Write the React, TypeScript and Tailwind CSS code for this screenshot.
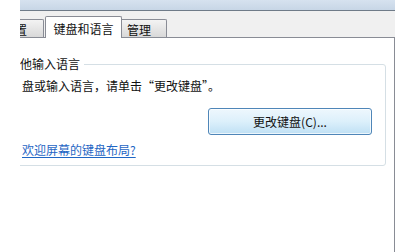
import React from "react";

const font = { fontFamily: '"Noto Sans CJK SC", "Microsoft YaHei", sans-serif' };

export default function App() {
  return (
    <div
      className="flex w-[404px] h-[252px] bg-white overflow-hidden text-[12px] leading-[14px] text-[#111111]"
      style={font}
    >
      <div className="w-[20px] shrink-0" />
      <div className="flex flex-col w-[375px] shrink-0 overflow-hidden">
        {/* window top strip */}
        <div className="h-[11px] shrink-0 bg-gradient-to-b from-[#d6e2ef] to-[#c7d6e6] border-b border-[#6f7b88]" />
        {/* tab bar */}
        <div className="h-[26px] shrink-0 bg-[#f0f0f0] flex items-end">
          <div className="w-[24px] h-[18px] overflow-hidden flex justify-end pr-[16px] pt-[3px] bg-gradient-to-b from-[#f3f3f3] to-[#d9d9d9] border-r border-t border-[#898c95] rounded-tr-[2px] whitespace-nowrap">
            位置
          </div>
          <div className="w-[1px]" />
          <div className="relative z-10 mb-[-1px] h-[22px] w-[77px] bg-white border-l border-r border-t border-[#898c95] rounded-t-[2px] flex justify-center pt-[5px] whitespace-nowrap">
            键盘和语言
          </div>
          <div className="h-[18px] w-[45px] bg-gradient-to-b from-[#f3f3f3] to-[#d9d9d9] border-r border-t border-[#898c95] rounded-tr-[2px] pl-[5px] pt-[3px] whitespace-nowrap">
            管理
          </div>
        </div>
        {/* panel */}
        <div className="flex-1 bg-white border-t border-r border-[#898c95] overflow-hidden">
          <fieldset className="mt-[19px] ml-[-14px] mr-[8px] border border-[#d5dfe5] rounded-[3px] pb-[8px]">
            <legend className="pl-[1px] pr-[4px] whitespace-nowrap leading-[14px]">其他输入语言</legend>
            <div className="mt-[8px] ml-[15px] whitespace-nowrap">盘或输入语言，请单击“更改键盘”。</div>
            <div className="mt-[15px] flex justify-end pr-[13px]">
              <button className="w-[164px] h-[27px] rounded-[3px] border border-[#4f86b8] bg-gradient-to-b from-[#eef7fd] via-[#dcf0fb] to-[#bfe0f4] text-[#111111] text-[12px] leading-[14px] shadow-[inset_0_0_0_1px_rgba(255,255,255,0.7)]">
                更改键盘(C)...
              </button>
            </div>
            <div className="mt-[8px] ml-[15px] whitespace-nowrap">
              <a className="text-[#1f66c4] underline underline-offset-[2px]">欢迎屏幕的键盘布局?</a>
            </div>
          </fieldset>
        </div>
      </div>
    </div>
  );
}
